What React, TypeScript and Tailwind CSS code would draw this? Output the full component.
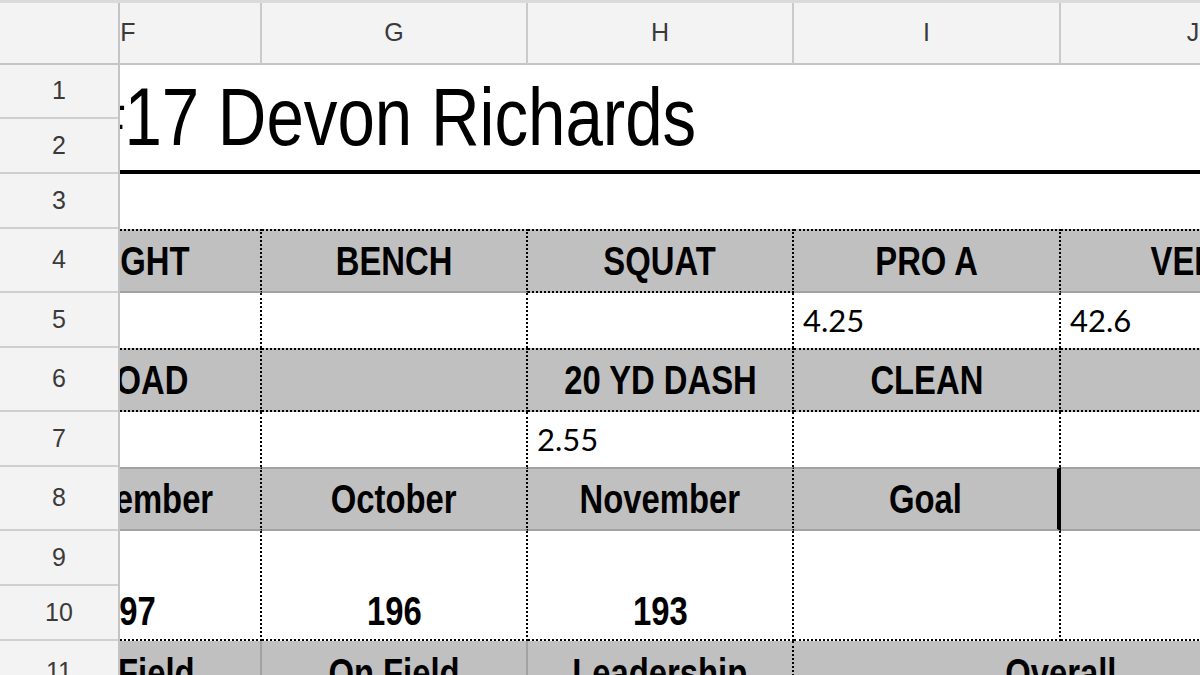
import type { ReactNode } from "react";

// the sheet uses a condensed face; Liberation Sans squeezed to Arial Narrow proportions
const narrow = "font-['Liberation_Sans',Arial,sans-serif] inline-block scale-x-[0.82]";
const sans = "font-['Liberation_Sans',Arial,sans-serif]";
const calibri = "font-['Lato','Open_Sans',sans-serif]";

// column widths, F is partly scrolled off to the left
const colW = ["w-[266px]", "w-[266px]", "w-[266px]", "w-[267px]", "w-[266px]"];
const letters = ["F", "G", "H", "I", "J"];

const rowHeights = [
  "h-[54px]",
  "h-[55px]",
  "h-[55px]",
  "h-[64px]",
  "h-[55px]",
  "h-[64px]",
  "h-[55px]",
  "h-[64px]",
  "h-[55px]",
  "h-[55px]",
  "h-[63px]",
];

const dotR = "border-r-2 [border-right-style:dotted] border-r-black";
const dotB = "border-b-2 [border-bottom-style:dotted] border-b-black";
const dotT = "border-t-2 [border-top-style:dotted] border-t-black";
const grayB = "border-b-2 border-b-[#a2a2a2]";
const grayT = "border-t-2 border-t-[#a2a2a2]";
const grayR = "border-r-2 border-r-[#a2a2a2]";

type CellProps = { w: string; className?: string; children?: ReactNode };

const Label = ({ w, className = "", children }: CellProps) => (
  <div
    className={`${w} shrink-0 h-full bg-[#c0c0c0] flex items-center justify-center whitespace-nowrap ${className}`}
  >
    <span className={`${narrow} font-bold text-[40px] leading-none text-black`}>{children}</span>
  </div>
);

const Value = ({ w, className = "", children }: CellProps) => (
  <div className={`${w} shrink-0 h-full bg-white pt-[12px] pl-[9px] whitespace-nowrap ${className}`}>
    <span className={`${calibri} text-[31px] leading-none text-black`}>{children}</span>
  </div>
);

const Big = ({ w, className = "", children }: CellProps) => (
  <div
    className={`${w} shrink-0 h-full bg-white flex items-end justify-center pb-[8px] whitespace-nowrap ${className}`}
  >
    <span className={`${narrow} font-bold text-[40px] leading-none text-black`}>{children}</span>
  </div>
);

export default function App() {
  return (
    <div className="w-[1200px] h-[675px] overflow-hidden bg-white flex flex-col">
      <div className="h-[3px] bg-[#dadada] shrink-0" />
      <div className="flex flex-1 min-h-0">
        {/* row numbers */}
        <div className="w-[120px] shrink-0 flex flex-col bg-[#f3f3f3] border-r-2 border-r-[#c4c4c4] z-10">
          <div className="h-[62px] shrink-0 border-b-2 border-b-[#c4c4c4]" />
          {rowHeights.map((h, i) => (
            <div
              key={i}
              className={`${h} shrink-0 flex items-center justify-center border-b-2 border-b-[#cfcfcf] ${sans} text-[25px] text-[#3a3a3a]`}
            >
              {i + 1}
            </div>
          ))}
        </div>

        {/* sheet */}
        <div className="flex-1 overflow-hidden flex flex-col">
          <div className="flex h-[62px] shrink-0 -ml-[124px]">
            {letters.map((l, i) => (
              <div
                key={l}
                className={`${colW[i]} shrink-0 h-full bg-[#f3f3f3] border-r-2 border-r-[#cacaca] border-b-2 border-b-[#c4c4c4] flex items-center justify-center ${sans} text-[25px] text-[#3a3a3a]`}
              >
                {l}
              </div>
            ))}
          </div>

          <div className="flex flex-col -ml-[124px]">
            {/* rows 1-2 */}
            <div className="h-[109px] shrink-0 border-b-4 border-b-black pl-[91px] pt-[11px] whitespace-nowrap">
              <span className={`${narrow} origin-left text-[82px] leading-none text-black`}>
                #17 Devon Richards
              </span>
            </div>

            {/* row 3 */}
            <div className="h-[55px] shrink-0" />

            {/* row 4 */}
            <div className="flex h-[64px] shrink-0">
              <Label w={colW[0]} className={`${dotT} ${grayB} ${dotR}`}>HEIGHT</Label>
              <Label w={colW[1]} className={`${dotT} ${grayB} ${dotR}`}>BENCH</Label>
              <Label w={colW[2]} className={`${dotT} ${dotB} ${dotR}`}>SQUAT</Label>
              <Label w={colW[3]} className={`${dotT} ${grayB} ${dotR}`}>PRO A</Label>
              <Label w={colW[4]} className={`${dotT} ${grayB}`}>VERT</Label>
            </div>

            {/* row 5 */}
            <div className="flex h-[55px] shrink-0">
              <Value w={colW[0]} className={dotR} />
              <Value w={colW[1]} className={dotR} />
              <Value w={colW[2]} className={dotR} />
              <Value w={colW[3]} className={dotR}>4.25</Value>
              <Value w={colW[4]}>42.6</Value>
            </div>

            {/* row 6 */}
            <div className="flex h-[64px] shrink-0">
              <Label w={colW[0]} className={`${dotT} ${dotB} ${dotR}`}>BROAD</Label>
              <Label w={colW[1]} className={`${dotT} ${dotB} ${dotR}`} />
              <Label w={colW[2]} className={`${dotT} ${dotB} ${dotR}`}>20 YD DASH</Label>
              <Label w={colW[3]} className={`${dotT} ${dotB} ${dotR}`}>CLEAN</Label>
              <Label w={colW[4]} className={`${dotT} ${dotB}`} />
            </div>

            {/* row 7 */}
            <div className="flex h-[55px] shrink-0">
              <Value w={colW[0]} className={dotR} />
              <Value w={colW[1]} className={dotR} />
              <Value w={colW[2]} className={dotR}>2.55</Value>
              <Value w={colW[3]} className={dotR} />
              <Value w={colW[4]} />
            </div>

            {/* row 8 */}
            <div className="flex h-[64px] shrink-0">
              <Label w={colW[0]} className={`${grayT} ${grayB} ${dotR}`}>September</Label>
              <Label w={colW[1]} className={`${grayT} ${grayB} ${dotR}`}>October</Label>
              <Label w={colW[2]} className={`${grayT} ${grayB} ${dotR}`}>November</Label>
              <Label w={colW[3]} className={`${grayT} ${grayB} border-r-4 border-r-black`}>Goal</Label>
              <Label w={colW[4]} className={`${grayT} ${grayB}`} />
            </div>

            {/* rows 9-10 */}
            <div className="flex h-[110px] shrink-0">
              <Big w={colW[0]} className={`${dotR} ${dotB}`}>197</Big>
              <Big w={colW[1]} className={`${dotR} ${dotB}`}>196</Big>
              <Big w={colW[2]} className={`${dotR} ${dotB}`}>193</Big>
              <Big w={colW[3]} className={`${dotR} ${dotB}`} />
              <Big w={colW[4]} className={dotB} />
            </div>

            {/* row 11 */}
            <div className="flex h-[63px] shrink-0">
              <Label w={colW[0]} className={grayR}>Off Field</Label>
              <Label w={colW[1]} className={grayR}>On Field</Label>
              <Label w={colW[2]} className={dotR}>Leadership</Label>
              <Label w="w-[533px]">Overall</Label>
            </div>
          </div>
        </div>
      </div>
    </div>
  );
}
